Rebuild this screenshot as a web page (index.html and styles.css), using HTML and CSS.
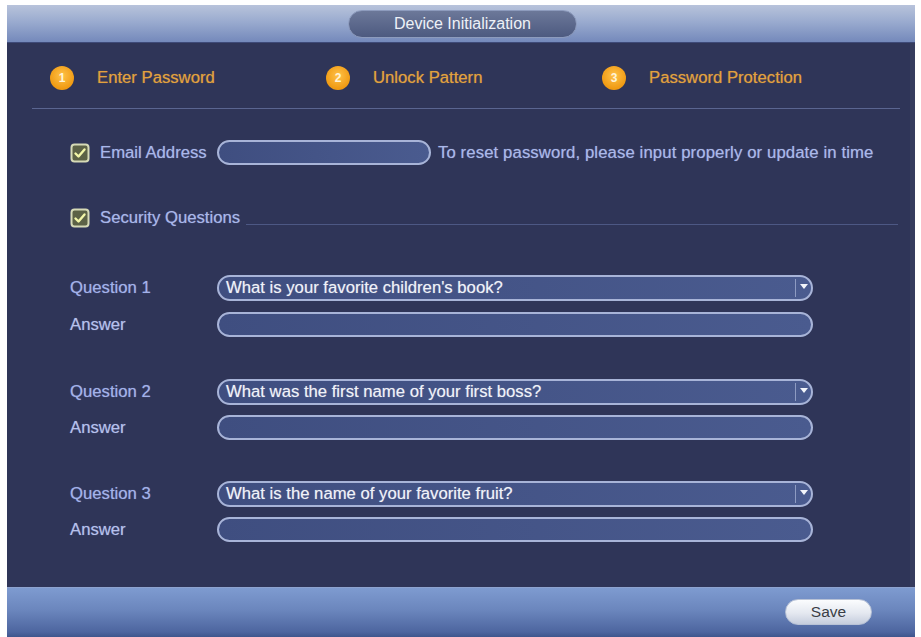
FILE: index.html
```html
<!DOCTYPE html>
<html>
<head>
<meta charset="utf-8">
<title>Device Initialization</title>
<link rel="stylesheet" href="styles.css">
</head>
<body>
<div class="window">
  <div class="titlebar">
    <div class="title-pill">Device Initialization</div>
  </div>
  <div class="content">
    <div class="steps">
      <div class="step"><span class="num">1</span><span class="step-text">Enter Password</span></div>
      <div class="step"><span class="num">2</span><span class="step-text">Unlock Pattern</span></div>
      <div class="step"><span class="num">3</span><span class="step-text">Password Protection</span></div>
    </div>
    <div class="divider"></div>
    <div class="form">
      <div class="email-row">
        <svg class="check" width="20" height="20" viewBox="0 0 20 20"><rect x="1.5" y="1.5" width="17" height="17" rx="3" fill="#5c6246" stroke="#d6dab6" stroke-width="2"/><path d="M5.5 10.5 L8.5 13.5 L14.5 6.5" fill="none" stroke="#f2f6a8" stroke-width="2.4" stroke-linecap="round" stroke-linejoin="round"/></svg>
        <span class="label email-label">Email Address</span>
        <div class="field email-field"></div>
        <span class="hint">To reset password, please input properly or update in time</span>
      </div>
      <div class="security-row">
        <svg class="check" width="20" height="20" viewBox="0 0 20 20"><rect x="1.5" y="1.5" width="17" height="17" rx="3" fill="#5c6246" stroke="#d6dab6" stroke-width="2"/><path d="M5.5 10.5 L8.5 13.5 L14.5 6.5" fill="none" stroke="#f2f6a8" stroke-width="2.4" stroke-linecap="round" stroke-linejoin="round"/></svg>
        <span class="label">Security Questions</span>
        <div class="sec-line"></div>
      </div>

      <div class="qgroup first">
        <div class="qrow">
          <span class="qlabel">Question 1</span>
          <div class="field select"><span class="sel-text">What is your favorite children's book?</span><span class="sel-div"></span><span class="arrow"></span></div>
        </div>
        <div class="arow">
          <span class="qlabel alabel">Answer</span>
          <div class="field answer"></div>
        </div>
      </div>

      <div class="qgroup">
        <div class="qrow">
          <span class="qlabel">Question 2</span>
          <div class="field select"><span class="sel-text">What was the first name of your first boss?</span><span class="sel-div"></span><span class="arrow"></span></div>
        </div>
        <div class="arow">
          <span class="qlabel alabel">Answer</span>
          <div class="field answer"></div>
        </div>
      </div>

      <div class="qgroup">
        <div class="qrow">
          <span class="qlabel">Question 3</span>
          <div class="field select"><span class="sel-text">What is the name of your favorite fruit?</span><span class="sel-div"></span><span class="arrow"></span></div>
        </div>
        <div class="arow">
          <span class="qlabel alabel">Answer</span>
          <div class="field answer"></div>
        </div>
      </div>
    </div>
  </div>
  <div class="footer">
    <div class="save-btn">Save</div>
  </div>
</div>
</body>
</html>
```

FILE: styles.css
```css
html, body {
  margin: 0;
  padding: 0;
  background: #ffffff;
}
body {
  font-family: "Liberation Sans", Arial, sans-serif;
  font-size: 16.7px;
}
.window {
  margin: 5px 0 0 7px;
  width: 908px;
  height: 632px;
  display: flex;
  flex-direction: column;
  background: #2f3558;
  box-shadow: inset -5px 0 0 #363c5e;
}
.titlebar {
  height: 38px;
  flex: none;
  display: flex;
  align-items: center;
  justify-content: center;
  background: linear-gradient(#b8c3db 0%, #9aabcf 45%, #7489bb 100%);
  border-bottom: 1px solid #3e4a78;
  box-sizing: border-box;
}
.title-pill {
  width: 229px;
  height: 28px;
  border-radius: 14px;
  box-sizing: border-box;
  background: linear-gradient(#6c7899, #4d5a80);
  border: 1px solid #8d9bbd;
  color: #eef1f7;
  font-size: 16px;
  display: flex;
  align-items: center;
  justify-content: center;
  margin-left: 3px;
}
.content {
  flex: 1;
  padding: 0 15px 0 25px;
}
.steps {
  margin-top: 22px;
  height: 25px;
  display: flex;
  padding-left: 18px;
}
.step {
  width: 276px;
  display: flex;
  align-items: center;
  gap: 23px;
}
.num {
  width: 24px;
  height: 24px;
  border-radius: 50%;
  background: radial-gradient(circle at 50% 40%, #ffc24a, #f09a12 70%);
  color: #fff4d8;
  font-size: 12px;
  font-weight: bold;
  display: flex;
  align-items: center;
  justify-content: center;
}
.step-text {
  color: #e2a13e;
  text-shadow: 0 0 1px rgba(226, 161, 62, 0.6);
}
.divider {
  margin-top: 18px;
  height: 1px;
  background: #5a6590;
}
.form {
  padding-left: 38px;
}
.email-row {
  margin-top: 31px;
  height: 25px;
  display: flex;
  align-items: center;
}
.check {
  flex: none;
  margin-right: 10px;
}
.label {
  color: #a9b7ea;
  text-shadow: 0 0 1px rgba(169, 183, 234, 0.6);
}
.email-label {
  width: 117px;
}
.field {
  box-sizing: border-box;
  border: 2px solid #a8b4d8;
  border-radius: 13px;
  background: linear-gradient(90deg, #3f4e80, #4a5b8f);
}
.email-field {
  width: 214px;
  height: 25px;
  margin-right: 7px;
}
.hint {
  color: #aab8ea;
  white-space: nowrap;
  letter-spacing: 0.12px;
  text-shadow: 0 0 1px rgba(170, 184, 234, 0.6);
}
.security-row {
  margin-top: 41px;
  height: 24px;
  display: flex;
  align-items: center;
}
.sec-line {
  flex: 1;
  height: 1px;
  background: #4d5884;
  align-self: flex-end;
  margin: 0 2px 5px 6px;
}
.qgroup {
  margin-top: 42px;
}
.qgroup.first {
  margin-top: 45px;
}
.qgroup:last-child {
  margin-top: 41px;
}
.qrow, .arow {
  display: flex;
  align-items: center;
}
.arow {
  margin-top: 10px;
}
.qgroup.first .arow {
  margin-top: 11px;
}
.qlabel {
  width: 147px;
  color: #a3b2ea;
  text-shadow: 0 0 1px rgba(163, 178, 234, 0.6);
}
.alabel {
  color: #b6c1ec;
}
.select {
  width: 596px;
  height: 26px;
  display: flex;
  align-items: center;
  padding-left: 7px;
}
.sel-text {
  flex: 1;
  color: #f0f2f8;
  white-space: nowrap;
  text-shadow: 0 0 1px rgba(240, 242, 248, 0.5);
}
.sel-div {
  width: 1px;
  height: 18px;
  background: #8e9bc2;
  margin-right: 4px;
}
.arrow {
  width: 0;
  height: 0;
  border-left: 4px solid transparent;
  border-right: 4px solid transparent;
  border-top: 5px solid #f2f4fa;
  margin-right: 3px;
  margin-bottom: 3px;
}
.answer {
  width: 596px;
  height: 25px;
}
.footer {
  height: 50px;
  flex: none;
  box-sizing: border-box;
  border-top: 1px solid #8ea3cf;
  background: linear-gradient(#7e9bd0 0%, #6b86bd 45%, #4d659f 90%, #3e558c 100%);
  display: flex;
  justify-content: flex-end;
  align-items: flex-start;
  padding: 11px 43px 0 0;
}
.save-btn {
  width: 87px;
  height: 26px;
  box-sizing: border-box;
  border-radius: 13px;
  background: linear-gradient(#fbfcfe, #e4e8f0 55%, #c5cddd);
  border: 1px solid #b8c2d6;
  color: #3a3d45;
  font-size: 15.5px;
  display: flex;
  align-items: center;
  justify-content: center;
}
```
